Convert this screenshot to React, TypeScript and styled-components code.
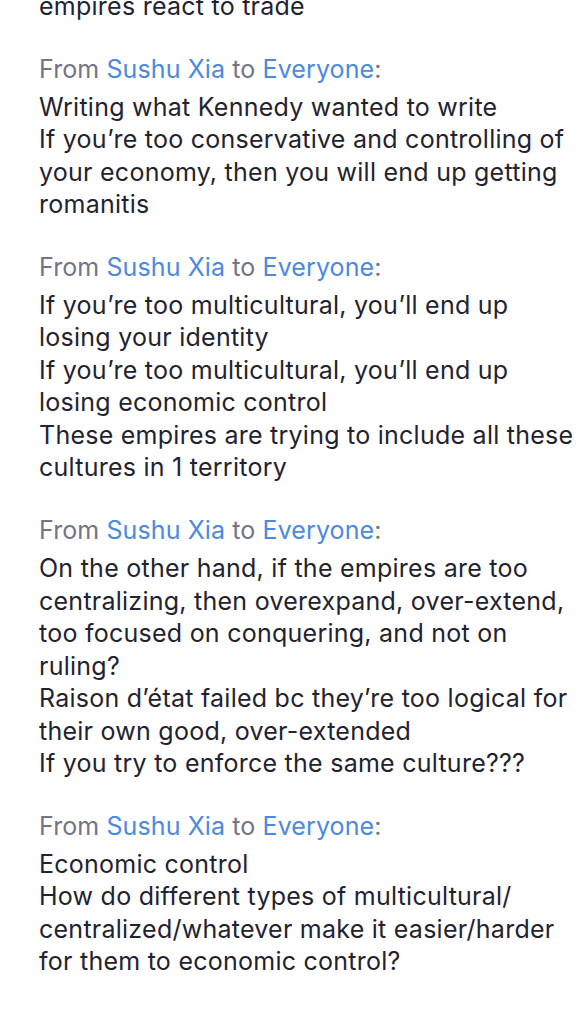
import React from "react";
import styled, { createGlobalStyle } from "styled-components";

const Global = createGlobalStyle`
  html, body { margin: 0; padding: 0; background: #ffffff; }
  body { font-family: Inter, "Noto Sans", "Liberation Sans", sans-serif; -webkit-font-smoothing: antialiased; }
`;

const Page = styled.div`
  width: 586px;
  height: 1014px;
  overflow: hidden;
  background: #ffffff;
`;

const Feed = styled.div`
  display: flex;
  flex-direction: column;
  gap: 30px;
  padding-left: 39px;
  padding-right: 8px;
  margin-top: -10px;
`;

const Message = styled.div`
  display: flex;
  flex-direction: column;
  gap: 6px;
`;

const Header = styled.div`
  font-size: 25px;
  line-height: 32px;
  letter-spacing: 0.1px;
  color: #747487;
  white-space: nowrap;
`;

const Name = styled.span`
  color: #4a8ae0;
`;

const Body = styled.div`
  font-size: 25px;
  line-height: 32.55px;
  letter-spacing: 0.25px;
  color: #23232f;
`;

const Line = styled.div``;

type Msg = { from?: string; to?: string; lines: string[] };

const messages: Msg[] = [
  { lines: ["empires react to trade"] },
  {
    from: "Sushu Xia",
    to: "Everyone",
    lines: [
      "Writing what Kennedy wanted to write",
      "If you’re too conservative and controlling of your economy, then you will end up getting romanitis",
    ],
  },
  {
    from: "Sushu Xia",
    to: "Everyone",
    lines: [
      "If you’re too multicultural, you’ll end up losing your identity",
      "If you’re too multicultural, you’ll end up losing economic control",
      "These empires are trying to include all these cultures in 1 territory",
    ],
  },
  {
    from: "Sushu Xia",
    to: "Everyone",
    lines: [
      "On the other hand, if the empires are too centralizing, then overexpand, over-extend, too focused on conquering, and not on ruling?",
      "Raison d’état failed bc they’re too logical for their own good, over-extended",
      "If you try to enforce the same culture???",
    ],
  },
  {
    from: "Sushu Xia",
    to: "Everyone",
    lines: [
      "Economic control",
      "How do different types of multicultural/ centralized/whatever make it easier/harder for them to economic control?",
    ],
  },
];

export default function App() {
  return (
    <Page>
      <Global />
      <Feed>
        {messages.map((m, i) => (
          <Message key={i}>
            {m.from && (
              <Header>
                From <Name>{m.from}</Name> to <Name>{m.to}</Name>:
              </Header>
            )}
            <Body>
              {m.lines.map((l, j) => (
                <Line key={j}>{l}</Line>
              ))}
            </Body>
          </Message>
        ))}
      </Feed>
    </Page>
  );
}
